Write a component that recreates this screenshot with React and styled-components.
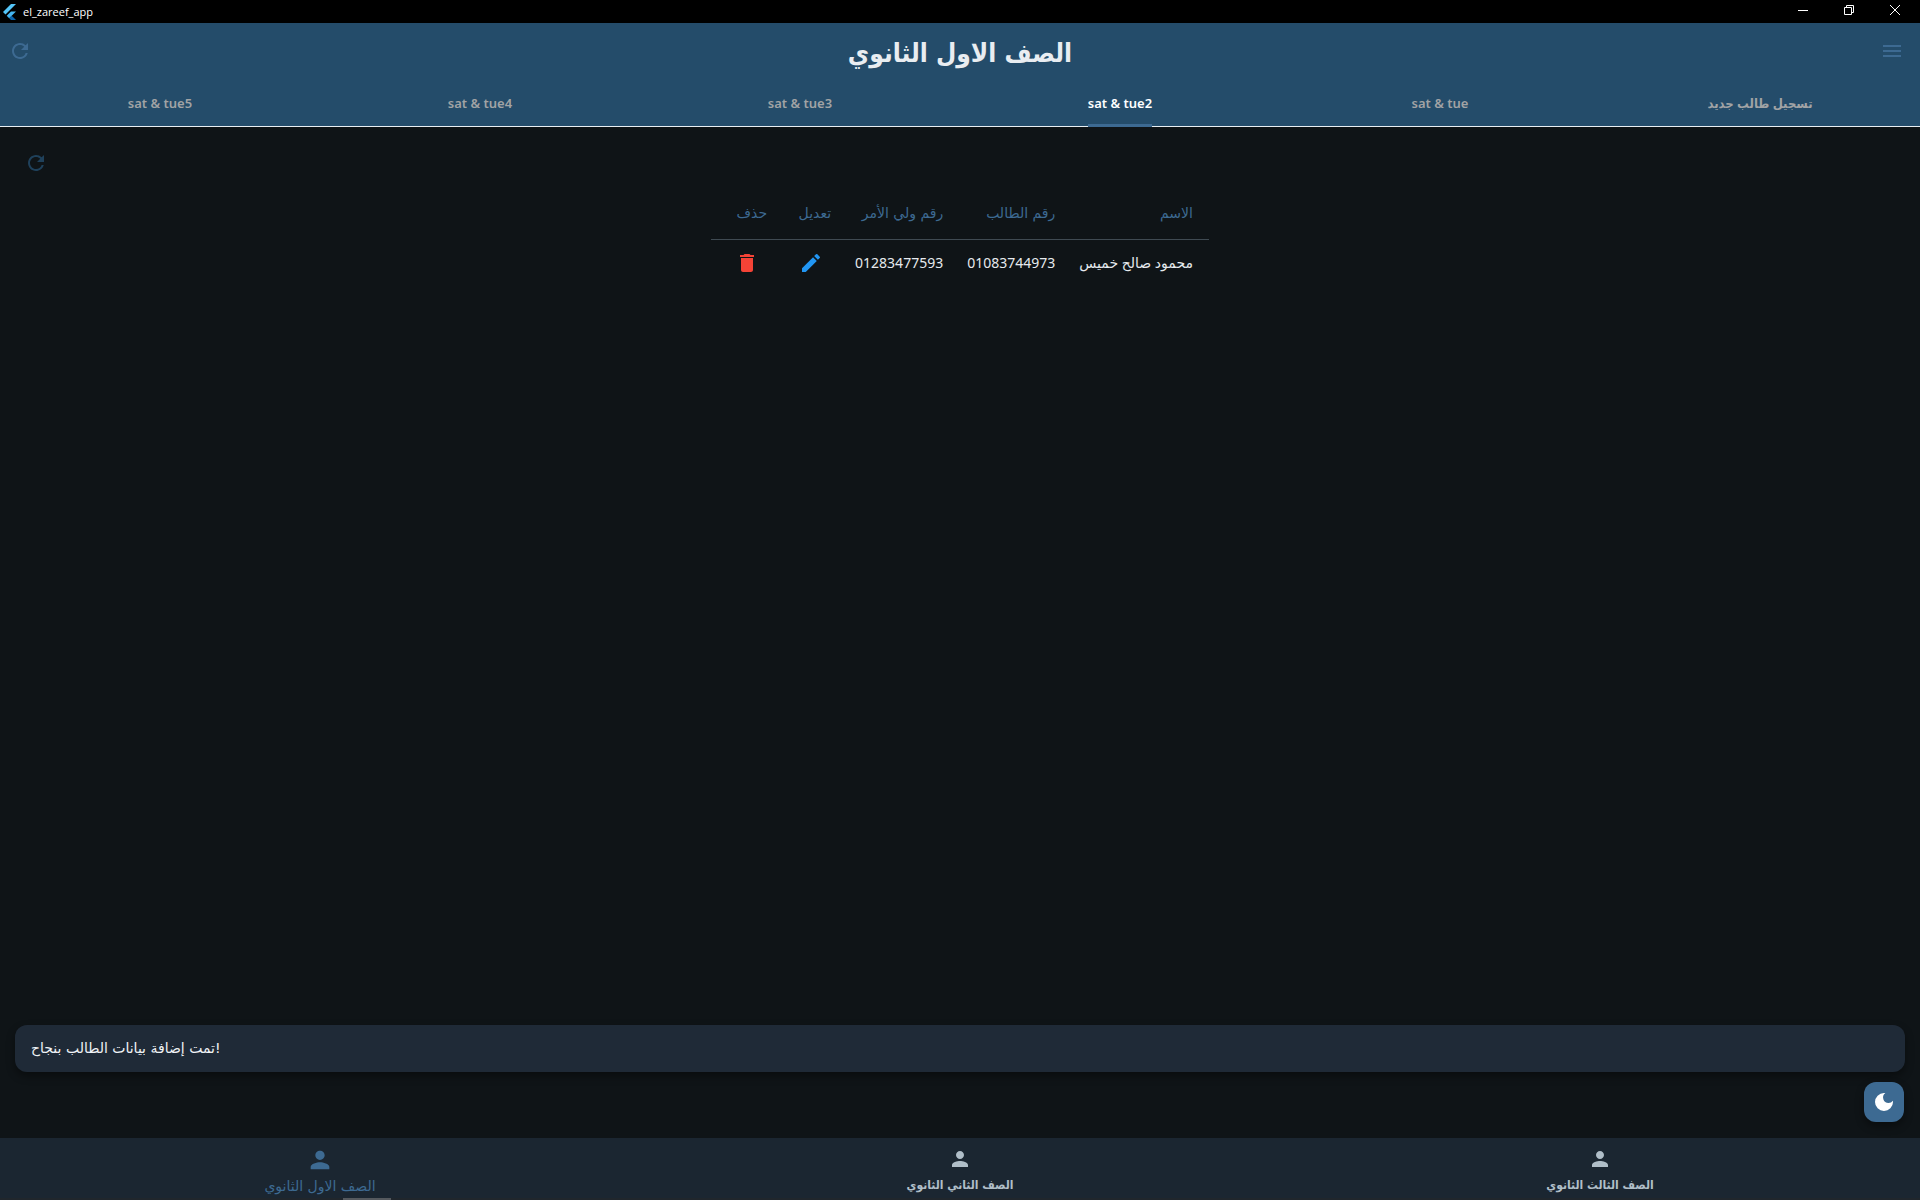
import React, { useState } from "react";
import styled, { createGlobalStyle } from "styled-components";
import { MdRefresh, MdMenu, MdDelete, MdEdit, MdPerson, MdDarkMode } from "react-icons/md";

const GlobalStyle = createGlobalStyle`
  * { box-sizing: border-box; }
  body { margin: 0; background: #0f1417; }
  button { border: 0; padding: 0; background: none; font: inherit; color: inherit; cursor: pointer; }
  svg { display: block; }
`;

const Window = styled.div`
  display: flex;
  flex-direction: column;
  height: 100vh;
  overflow: hidden;
  background: #0f1417;
  color: #e6eaee;
  font: 14px/20px "Noto Sans", "DejaVu Sans", sans-serif;
`;

const TitleBar = styled.div`
  display: flex;
  align-items: center;
  justify-content: space-between;
  flex: none;
  height: 23px;
  background: #000;
  color: #fff;
`;

const AppName = styled.div`
  display: flex;
  align-items: center;
  gap: 6px;
  padding-left: 3px;
  font: 11px/20px "Open Sans", "Noto Sans", sans-serif;
`;

const WindowControls = styled.div`
  display: flex;
  align-self: flex-start;
  padding-right: 2px;
`;

const WindowButton = styled.button`
  display: grid;
  place-items: center;
  width: 46px;
  height: 20px;
`;

const Header = styled.header`
  flex: none;
  background: #244c6a;
  border-bottom: 1px solid #e8eef2;
`;

const AppBar = styled.div`
  display: grid;
  grid-template-columns: 1fr auto 1fr;
  align-items: center;
  height: 56px;
  padding: 0 8px;
  color: #3d6a92;
`;

const IconButton = styled.button`
  display: grid;
  place-items: center;
  width: 24px;
  height: 24px;
  color: ${(p) => p.$color || "inherit"};
`;

const MenuButton = styled(IconButton)`
  justify-self: end;
  margin-right: 8px;
`;

const PageTitle = styled.h1`
  margin: 0;
  padding-top: 4px;
  color: #e9edf1;
  font: 700 26px/40px "DejaVu Sans Condensed", "DejaVu Sans", sans-serif;
`;

const Tabs = styled.div`
  display: grid;
  grid-template-columns: repeat(6, 1fr);
  height: 48px;
  margin-bottom: -1px;
`;

const Tab = styled.button`
  display: flex;
  justify-content: center;
  color: ${(p) => (p.$active ? "#fff" : "#a1a3a5")};
  font: 600 13px/20px "Noto Sans", "DejaVu Sans Condensed", "DejaVu Sans", sans-serif;
`;

const TabLabel = styled.span`
  height: 48px;
  padding-top: 14px;
  border-bottom: 3px solid ${(p) => (p.$active ? "#3d6a92" : "transparent")};
`;

const Content = styled.main`
  display: flex;
  flex-direction: column;
  flex: 1;
  padding: 24px 24px 0;
`;

const Table = styled.table`
  align-self: center;
  margin-top: 12px;
  border-collapse: collapse;
`;

const HeadCell = styled.th`
  height: 52px;
  padding: 0 12px;
  border-bottom: 1px solid #3f4a52;
  color: #3d6a92;
  font: 400 14px/20px "DejaVu Sans", sans-serif;
  text-align: start;
  &:first-child { padding-inline-start: 16px; }
  &:last-child { padding-inline-end: 16px; }
`;

const Cell = styled.td`
  height: 48px;
  padding: 0 12px;
  color: #e6eaee;
  font: 14px/20px "Noto Sans", "DejaVu Sans", sans-serif;
  &:first-child { padding-inline-start: 16px; }
  &:last-child { padding-inline-end: 16px; }
`;

const CellAction = styled(IconButton)`
  width: 40px;
  height: 40px;
`;

const Snackbar = styled.div`
  margin: 0 15px 10px;
  padding: 13px 16px;
  border-radius: 12px;
  background: #1f2a37;
  box-shadow: 0 4px 8px rgba(0, 0, 0, 0.4);
  color: #f0f3f6;
  font: 14px/21px "DejaVu Sans", sans-serif;
`;

const FabRow = styled.div`
  display: flex;
  justify-content: flex-end;
  padding: 0 16px 16px;
`;

const Fab = styled.button`
  display: grid;
  place-items: center;
  width: 40px;
  height: 40px;
  border-radius: 12px;
  background: #3d6a92;
  box-shadow: 0 4px 8px rgba(0, 0, 0, 0.4);
  color: #fff;
`;

const BottomNav = styled.nav`
  position: relative;
  display: grid;
  grid-template-columns: repeat(3, 1fr);
  flex: none;
  height: 62px;
  background: #1b2631;
  border-bottom: 2px solid #20262c;
`;

const NavItem = styled.button`
  display: flex;
  flex-direction: column;
  align-items: center;
  justify-content: center;
  gap: ${(p) => (p.$active ? "2px" : "4px")};
  padding-top: 6px;
  color: ${(p) => (p.$active ? "#3d6a92" : "#b0bec8")};
  font: ${(p) => (p.$active ? "400 14px" : "700 12px")}/20px ${(p) => (p.$active ? "" : '"DejaVu Sans Condensed", ')}"DejaVu Sans", sans-serif;
`;

const ScrollHandle = styled.span`
  position: absolute;
  bottom: -2px;
  left: 343px;
  width: 48px;
  height: 2px;
  background: #55595e;
`;

const FlutterLogo = () => (
  <svg width="14" height="16" viewBox="0 0 14 16" aria-hidden="true">
    <path d="M8 0h5L2.500 10.500 0 8z" fill="#54c5f8" />
    <path d="M8 7.400h5L8.700 11.700 6.200 14.200 3.700 11.700z" fill="#45b5f0" />
    <path d="M6.200 14.200l2.500-2.500L13 16H8z" fill="#0a64ad" />
  </svg>
);

const tabs = ["sat & tue5", "sat & tue4", "sat & tue3", "sat & tue2", "sat & tue", "تسجيل طالب جديد"];
const grades = ["الصف الاول الثانوي", "الصف الثاني الثانوي", "الصف الثالث الثانوي"];
const students = [{ name: "محمود صالح خميس", phone: "01083744973", parent: "01283477593" }];

export default function App() {
  const [tab, setTab] = useState(3);
  const [grade, setGrade] = useState(0);

  return (
    <Window>
      <GlobalStyle />
      <TitleBar>
        <AppName><FlutterLogo />el_zareef_app</AppName>
        <WindowControls>
          <WindowButton aria-label="Minimize">
            <svg width="10" height="10"><path d="M0 5.500h10" stroke="#fff" /></svg>
          </WindowButton>
          <WindowButton aria-label="Restore">
            <svg width="10" height="10" fill="none" stroke="#fff"><path d="M.5 2.500h7v7h-7zM2.500 2.500v-2h7v7h-2" /></svg>
          </WindowButton>
          <WindowButton aria-label="Close">
            <svg width="10" height="10" stroke="#fff"><path d="M0 0l10 10M10 0L0 10" /></svg>
          </WindowButton>
        </WindowControls>
      </TitleBar>

      <Header>
        <AppBar>
          <IconButton aria-label="Refresh"><MdRefresh size={24} /></IconButton>
          <PageTitle dir="rtl">{grades[grade]}</PageTitle>
          <MenuButton aria-label="Menu"><MdMenu size={24} /></MenuButton>
        </AppBar>
        <Tabs role="tablist">
          {tabs.map((label, i) => (
            <Tab key={label} role="tab" aria-selected={i === tab} $active={i === tab} onClick={() => setTab(i)}>
              <TabLabel $active={i === tab}>{label}</TabLabel>
            </Tab>
          ))}
        </Tabs>
      </Header>

      <Content>
        <IconButton aria-label="Refresh list" $color="#1f415b"><MdRefresh size={24} /></IconButton>
        <Table dir="rtl">
          <thead>
            <tr>
              <HeadCell>الاسم</HeadCell>
              <HeadCell>رقم الطالب</HeadCell>
              <HeadCell>رقم ولي الأمر</HeadCell>
              <HeadCell>تعديل</HeadCell>
              <HeadCell>حذف</HeadCell>
            </tr>
          </thead>
          <tbody>
            {students.map((s) => (
              <tr key={s.phone}>
                <Cell>{s.name}</Cell>
                <Cell>{s.phone}</Cell>
                <Cell>{s.parent}</Cell>
                <Cell><CellAction aria-label="تعديل" $color="#2196f3"><MdEdit size={24} /></CellAction></Cell>
                <Cell><CellAction aria-label="حذف" $color="#f44336"><MdDelete size={24} /></CellAction></Cell>
              </tr>
            ))}
          </tbody>
        </Table>
      </Content>

      <Snackbar role="status">تمت إضافة بيانات الطالب بنجاح!</Snackbar>
      <FabRow>
        <Fab aria-label="Dark mode"><MdDarkMode size={24} /></Fab>
      </FabRow>

      <BottomNav>
        {grades.map((label, i) => (
          <NavItem key={label} $active={i === grade} onClick={() => setGrade(i)}>
            <MdPerson size={i === grade ? 28 : 24} />
            {label}
          </NavItem>
        ))}
        <ScrollHandle />
      </BottomNav>
    </Window>
  );
}
